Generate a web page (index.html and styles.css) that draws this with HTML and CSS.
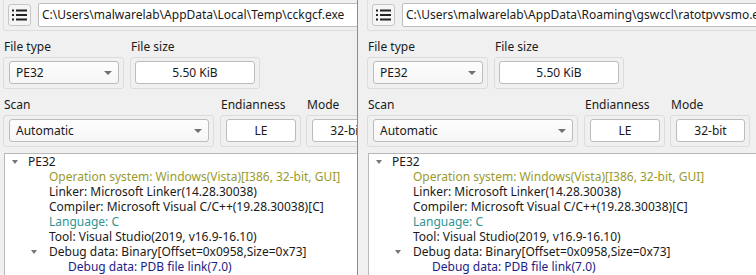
FILE: index.html
```html
<!DOCTYPE html>
<html>
<head>
<meta charset="utf-8">
<link rel="stylesheet" href="styles.css">
</head>
<body>
<div class="desk">
  <div class="win win-left">
    <div class="toprow">
      <button class="listbtn"><svg width="15" height="12" viewBox="0 0 15 12"><g fill="#222"><rect x="0" y="0.5" width="2" height="2"/><rect x="0" y="5" width="2" height="2"/><rect x="0" y="9.5" width="2" height="2"/><rect x="4" y="0.5" width="11" height="2"/><rect x="4" y="5" width="11" height="2"/><rect x="4" y="9.5" width="11" height="2"/></g></svg></button>
      <div class="path">C:\Users\malwarelab\AppData\Local\Temp\cckgcf.exe</div>
    </div>
    <div class="fields">
      <div class="field w-type"><div class="lbl">File type</div><div class="frame"><div class="combo"><span>PE32</span><i class="caret"></i></div></div></div>
      <div class="field w-size"><div class="lbl">File size</div><div class="frame"><div class="edit">5.50 KiB</div></div></div>
    </div>
    <div class="fields">
      <div class="field w-scan"><div class="lbl">Scan</div><div class="frame"><div class="combo"><span>Automatic</span><i class="caret"></i></div></div></div>
      <div class="field w-end"><div class="lbl">Endianness</div><div class="frame"><div class="edit">LE</div></div></div>
      <div class="field w-mode"><div class="lbl">Mode</div><div class="frame"><div class="edit">32-bit</div></div></div>
    </div>
    <div class="tree">
      <div class="row l0"><i class="arrow"></i>PE32</div>
      <div class="row l1 os">Operation system: Windows(Vista)[I386, 32-bit, GUI]</div>
      <div class="row l1">Linker: Microsoft Linker(14.28.30038)</div>
      <div class="row l1">Compiler: Microsoft Visual C/C++(19.28.30038)[C]</div>
      <div class="row l1 lang">Language: C</div>
      <div class="row l1">Tool: Visual Studio(2019, v16.9-16.10)</div>
      <div class="row l1"><i class="arrow"></i>Debug data: Binary[Offset=0x0958,Size=0x73]</div>
      <div class="row l2 dbg">Debug data: PDB file link(7.0)</div>
    </div>
  </div>

  <div class="win win-right">
    <div class="toprow">
      <button class="listbtn"><svg width="15" height="12" viewBox="0 0 15 12"><g fill="#222"><rect x="0" y="0.5" width="2" height="2"/><rect x="0" y="5" width="2" height="2"/><rect x="0" y="9.5" width="2" height="2"/><rect x="4" y="0.5" width="11" height="2"/><rect x="4" y="5" width="11" height="2"/><rect x="4" y="9.5" width="11" height="2"/></g></svg></button>
      <div class="path">C:\Users\malwarelab\AppData\Roaming\gswccl\ratotpvvsmo.exe</div>
    </div>
    <div class="fields">
      <div class="field w-type"><div class="lbl">File type</div><div class="frame"><div class="combo"><span>PE32</span><i class="caret"></i></div></div></div>
      <div class="field w-size"><div class="lbl">File size</div><div class="frame"><div class="edit">5.50 KiB</div></div></div>
    </div>
    <div class="fields">
      <div class="field w-scan"><div class="lbl">Scan</div><div class="frame"><div class="combo"><span>Automatic</span><i class="caret"></i></div></div></div>
      <div class="field w-end"><div class="lbl">Endianness</div><div class="frame"><div class="edit">LE</div></div></div>
      <div class="field w-mode"><div class="lbl">Mode</div><div class="frame"><div class="edit">32-bit</div></div></div>
    </div>
    <div class="tree">
      <div class="row l0"><i class="arrow"></i>PE32</div>
      <div class="row l1 os">Operation system: Windows(Vista)[I386, 32-bit, GUI]</div>
      <div class="row l1">Linker: Microsoft Linker(14.28.30038)</div>
      <div class="row l1">Compiler: Microsoft Visual C/C++(19.28.30038)[C]</div>
      <div class="row l1 lang">Language: C</div>
      <div class="row l1">Tool: Visual Studio(2019, v16.9-16.10)</div>
      <div class="row l1"><i class="arrow"></i>Debug data: Binary[Offset=0x0958,Size=0x73]</div>
      <div class="row l2 dbg">Debug data: PDB file link(7.0)</div>
    </div>
  </div>
</div>
</body>
</html>
```

FILE: styles.css
```css
* { box-sizing: border-box; }
html, body { margin: 0; padding: 0; }
body {
  width: 756px; height: 275px; overflow: hidden;
  background: #f0f0f0;
  font-family: "Noto Sans", "Open Sans", sans-serif;
  font-size: 12px;
  color: #1a1a1a;
}
.desk { position: relative; width: 756px; height: 275px; overflow: hidden; }
.win {
  position: absolute; top: 0; height: 275px;
  background: #f0f0f0;
  padding: 0 0 0 9px;
  border-left: 1px solid #8c8c8c;
  width: 420px;
}
.win-left { left: -7px; z-index: 1; }
.win-right { left: 357px; z-index: 2; }

.toprow {
  display: flex; align-items: center; gap: 7px;
  height: 31px; padding: 0 0 0 4px;
  border: 1px solid #dedede; border-top: none; border-radius: 0 0 3px 3px;
}
.listbtn {
  width: 23px; height: 22px; padding: 0;
  display: flex; align-items: center; justify-content: center;
  background: #f5f5f5; border: 1px solid #c6c6c6; border-radius: 3px;
}
.path {
  flex: 1; height: 24px; line-height: 22px;
  background: #fff; border: 1px solid #bdbdbd; border-radius: 2px;
  padding: 0 3px; white-space: nowrap; overflow: hidden;
}

.fields { display: flex; gap: 6px; }
.field { display: flex; flex-direction: column; }
.lbl { height: 16px; line-height: 16px; margin-top: 8px; margin-bottom: 2px; padding-left: 1px; }
.frame {
  border: 1px solid #dcdcdc; border-radius: 3px;
  padding: 3px 4px 4px 5px; height: 32px;
}
.w-type { width: 121px; }
.w-size { width: 130px; }
.w-size .frame { padding-left: 4px; padding-right: 4px; }
.w-scan { width: 211px; }
.w-end { width: 81px; }
.w-mode { width: 80px; margin-left: -1px; }

.combo {
  height: 23px; display: flex; align-items: center; justify-content: space-between;
  padding: 0 6px 0 6px;
  background: linear-gradient(#fdfdfd, #f6f6f6);
  border: 1px solid #bcbcbc; border-radius: 3px;
}
.caret {
  width: 0; height: 0;
  border-left: 4px solid transparent; border-right: 4px solid transparent;
  border-top: 4px solid #707070;
}
.edit {
  height: 23px; line-height: 21px; text-align: center;
  background: #fff; border: 1px solid #bcbcbc; border-radius: 3px;
}

.tree {
  margin-top: 6px; margin-left: 1px;
  height: 140px; background: #fff;
  border: 1px solid #b8b8b8; padding-top: 0;
}
.row { height: 15px; line-height: 15px; white-space: nowrap; position: relative; }
.l0 { padding-left: 23px; }
.l1 { padding-left: 44px; }
.l2 { padding-left: 63px; }
.arrow {
  position: absolute; top: 6px; margin-left: -16px;
  width: 0; height: 0;
  border-left: 3.5px solid transparent; border-right: 3.5px solid transparent;
  border-top: 4px solid #777;
}
.l1 .arrow { margin-left: -18px; }
.os { color: #999a2c; }
.lang { color: #2e9494; }
.dbg { color: #1c1c86; }
```
